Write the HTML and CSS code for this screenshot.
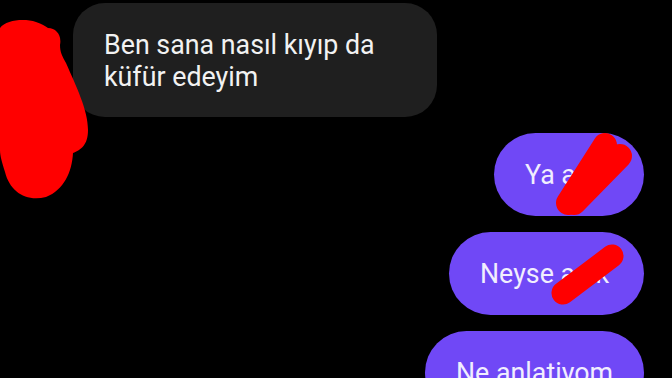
FILE: index.html
```html
<!DOCTYPE html>
<html lang="tr">
<head>
<meta charset="utf-8">
<link rel="stylesheet" href="styles.css">
</head>
<body>
<div class="chat">
  <div class="row-in">
    <div class="avatar">
      <svg class="blob" width="90" height="200" viewBox="0 0 90 200">
        <path d="M0,28 C6,20 24,18 36,22 C42,24 45,26 48,28 C56,28 62,35 60,45 C60,52 62,56 66,63 C76,86 88,110 88,130 C88,145 81,150 73,153 C72,172 64,190 46,197 C26,202 10,192 5,172 C2,162 0,156 0,150 Z" fill="#ff0000"/>
      </svg>
    </div>
    <div class="bubble-in">Ben sana nasıl kıyıp da küfür edeyim</div>
  </div>
  <div class="bubble-out b1">Ya aşk.
    <svg class="scribble" width="150" height="83" viewBox="0 0 150 83">
      <line x1="74" y1="70" x2="111" y2="12" stroke="#ff0000" stroke-width="24" stroke-linecap="round"/>
      <line x1="80" y1="70" x2="126" y2="23" stroke="#ff0000" stroke-width="24" stroke-linecap="round"/>
    </svg>
  </div>
  <div class="bubble-out b2">Neyse aşık
    <svg class="scribble" width="195" height="83" viewBox="0 0 195 83">
      <line x1="114" y1="61" x2="163" y2="24" stroke="#ff0000" stroke-width="23" stroke-linecap="round"/>
    </svg>
  </div>
  <div class="bubble-out b3">Ne anlatiyom</div>
</div>
</body>
</html>
```

FILE: styles.css
```css
html, body {
  margin: 0;
  padding: 0;
  background: #000;
  overflow: hidden;
}
body {
  width: 672px;
  height: 378px;
  font-family: Roboto, "Noto Sans", sans-serif;
}
.chat {
  display: flex;
  flex-direction: column;
  align-items: flex-end;
  gap: 16px;
  padding: 3px 28px 0 0;
  height: 378px;
  box-sizing: border-box;
  overflow: hidden;
}
.row-in {
  align-self: flex-start;
  display: flex;
  align-items: flex-start;
}
.avatar {
  width: 73px;
  height: 114px;
  position: relative;
}
.blob {
  position: absolute;
  left: 0;
  top: -3px;
}
.bubble-in {
  width: 364px;
  box-sizing: border-box;
  background: #1f1f1f;
  color: #f2f2f2;
  border-radius: 32px;
  padding: 26px 31px 24px 31px;
  font-size: 26.8px;
  line-height: 32px;
}
.bubble-out {
  position: relative;
  flex-shrink: 0;
  box-sizing: border-box;
  height: 83px;
  background: #7048f6;
  color: #f1eefe;
  border-radius: 42px;
  padding: 26px 31px 25px 31px;
  font-size: 26.8px;
  line-height: 32px;
  white-space: nowrap;
}
.b1 {
  width: 150px;
}
.b2 {
  width: 195px;
}
.scribble {
  position: absolute;
  right: 0;
  top: 0;
  overflow: visible;
}
```
